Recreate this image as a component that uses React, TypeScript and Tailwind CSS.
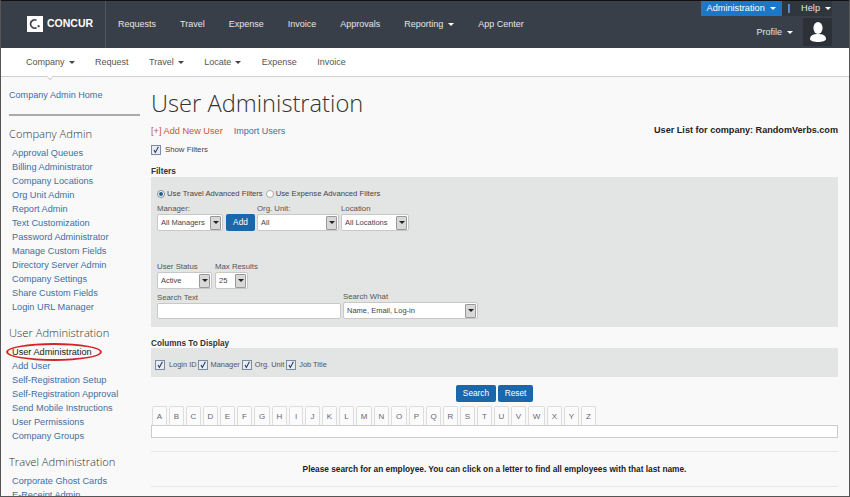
const Caret = ({ c = "border-t-white", ml = "ml-[5px]" }: { c?: string; ml?: string }) => (
  <span className={`inline-block w-0 h-0 border-l-[3px] border-r-[3px] border-t-[3px] border-l-transparent border-r-transparent ${c} ${ml} align-middle`} />
);

const Select = ({ w, text }: { w: string; text: string }) => (
  <div className={`flex items-center justify-between h-[17px] bg-white border border-[#c8c8c8] rounded-[2px] pl-[3px] pr-px ${w}`}>
    <span className="text-[7.5px] text-[#444] whitespace-nowrap">{text}</span>
    <span className="w-[11px] h-[14px] bg-[#d8d8d8] border border-[#999] rounded-[1px] flex items-center justify-center shrink-0">
      <span className="w-0 h-0 border-l-[3px] border-r-[3px] border-t-[3px] border-l-transparent border-r-transparent border-t-[#222]" />
    </span>
  </div>
);

const Check = () => (
  <span className="w-[10px] h-[10px] border border-[#7a8aa0] bg-[#e8edf4] flex items-center justify-center shrink-0">
    <svg viewBox="0 0 10 10" className="w-[8px] h-[8px]">
      <path d="M2.5 5 L4.2 8 L8 1" fill="none" stroke="#2b3a67" strokeWidth="1.4" />
    </svg>
  </span>
);

const Field = ({ label, children, className = "" }: { label: string; children: React.ReactNode; className?: string }) => (
  <div className={`flex flex-col ${className}`}>
    <span className="text-[7.8px] leading-[10px] text-[#555] whitespace-nowrap">{label}</span>
    {children}
  </div>
);

const Sec = ({ title, links, className = "" }: { title: string; links: string[]; className?: string }) => (
  <div className={className}>
    <div className="font-['Open_Sans'] font-light text-[11.2px] leading-[16px] text-[#333] whitespace-nowrap pl-[8px]">{title}</div>
    <ul className="mt-[4px] pl-[11px]">
      {links.map((l) => (
        <li key={l} className={`relative h-[14px] leading-[14px] text-[9.2px] whitespace-nowrap ${l === "User Administration" ? "text-[#222]" : "text-[#3f6f9f]"}`}>
          {l}
          {l === "User Administration" && (
            <span className="absolute left-[-6px] top-[-2px] w-[96px] h-[18px] rounded-[50%] border-2 border-[#d3242c]" />
          )}
        </li>
      ))}
    </ul>
  </div>
);

export default function App() {
  const letters = "ABCDEFGHIJKLMNOPQRSTUVWXYZ".split("");
  return (
    <div className="w-[850px] h-[497px] overflow-hidden bg-[#f9f9f9] font-['Liberation_Sans',Arial,sans-serif] flex flex-col border-l border-r border-[#555] relative">
      <header className="h-[48px] shrink-0 bg-[#383f48] border-t border-[#111] flex text-[#e3e6e9] text-[9px]">
        <div className="w-[105px] shrink-0 border-r border-[#505760] flex items-center pl-[26px] pb-[1px]">
          <span className="w-[16px] h-[16px] bg-white flex items-center justify-center">
            <svg viewBox="0 0 16 16" className="w-[16px] h-[16px]">
              <path d="M9.5 4.2 A4.2 4.2 0 1 0 9.5 11.8" fill="none" stroke="#383f48" strokeWidth="1.7" />
              <rect x="10.6" y="9.2" width="2" height="2" fill="#383f48" />
            </svg>
          </span>
          <span className="ml-[4px] font-bold text-[10.5px] text-white">CONCUR</span>
        </div>
        <nav className="flex items-center gap-[24px] pl-[12px]">
          <span>Requests</span>
          <span>Travel</span>
          <span>Expense</span>
          <span>Invoice</span>
          <span>Approvals</span>
          <span className="whitespace-nowrap">Reporting<Caret /></span>
          <span className="whitespace-nowrap">App Center</span>
        </nav>
        <div className="ml-auto w-[130px] mr-[17px] flex flex-col items-end">
          <div className="flex items-center h-[15px] bg-[#30363d]">
            <span className="h-[15px] bg-[#1a77c9] text-white px-[6px] leading-[15px] text-[9.2px] whitespace-nowrap">Administration<Caret /></span>
            <span className="mx-[6px] text-[9px] leading-[15px]">|</span>
            <span className="pr-[1px] pl-[5px] text-[9.2px] whitespace-nowrap">Help<Caret /></span>
          </div>
          <div className="flex items-center mt-[2px]">
            <span className="whitespace-nowrap mr-[10px] pt-[1px]">Profile<Caret /></span>
            <span className="w-[29px] h-[28px] bg-[#2c3138] flex items-center justify-center">
              <svg viewBox="0 0 24 24" className="w-[24px] h-[24px]">
                <ellipse cx="12" cy="8" rx="4.6" ry="6" fill="#fff" />
                <path d="M4 19 C4 15 8 14 12 14 C16 14 20 15 20 19 C20 21 16 22 12 22 C8 22 4 21 4 19Z" fill="#fff" />
              </svg>
            </span>
          </div>
        </div>
      </header>

      <div className="h-[29px] shrink-0 bg-white border-b border-[#cfcfcf] flex items-center pl-[25px] pt-[2px] gap-[20.5px] text-[9px] text-[#555] relative">
        <span className="whitespace-nowrap">Company<Caret c="border-t-[#444]" ml="ml-[4px]" /></span>
        <span>Request</span>
        <span className="whitespace-nowrap">Travel<Caret c="border-t-[#444]" ml="ml-[4px]" /></span>
        <span className="whitespace-nowrap">Locate<Caret c="border-t-[#444]" ml="ml-[4px]" /></span>
        <span>Expense</span>
        <span>Invoice</span>
        <span className="absolute left-[46px] bottom-[-3px] w-[6px] h-[6px] rotate-45 bg-white border-r border-b border-[#cfcfcf]" />
      </div>

      <div className="flex flex-1 min-h-0">
        <aside className="w-[150px] shrink-0 overflow-hidden">
          <div className="pl-[8px] pt-[12px] text-[9.1px] leading-[12px] text-[#3f6f9f] whitespace-nowrap">Company Admin Home</div>
          <div className="ml-[8px] w-[131px] mt-[13px] h-[2px] bg-[#aaa]" />
          <Sec
            className="mt-[10px]"
            title="Company Admin"
            links={["Approval Queues","Billing Administrator","Company Locations","Org Unit Admin","Report Admin","Text Customization","Password Administrator","Manage Custom Fields","Directory Server Admin","Company Settings","Share Custom Fields","Login URL Manager"]}
          />
          <Sec
            className="mt-[11px]"
            title="User Administration"
            links={["User Administration","Add User","Self-Registration Setup","Self-Registration Approval","Send Mobile Instructions","User Permissions","Company Groups"]}
          />
          <Sec
            className="mt-[11px]"
            title="Travel Administration"
            links={["Corporate Ghost Cards","E-Receipt Admin"]}
          />
        </aside>

        <main className="flex-1 min-w-0 pr-[11px] overflow-hidden">
          <h1 className="font-['Open_Sans'] font-light text-[23.7px] leading-[32px] mt-[10px] text-[#333] whitespace-nowrap">User Administration</h1>
          <div className="flex items-center justify-between mt-[4px] leading-[12px]">
            <div>
              <span className="text-[#c9543a] text-[9.2px]">[+] Add New User</span>
              <span className="text-[#3f6f9f] text-[9px] ml-[11px]">Import Users</span>
            </div>
            <span className="font-bold text-[9.1px] text-[#222]">User List for company: RandomVerbs.com</span>
          </div>
          <div className="flex items-center gap-[4px] mt-[7px] text-[7.8px] text-[#444] leading-[12px]">
            <Check />
            Show Filters
          </div>

          <div className="mt-[9px] font-bold text-[8.3px] leading-[12px] text-[#333]">Filters</div>
          <div className="bg-[#e3e4e4] h-[150px] px-[6px] pt-[11px]">
            <div className="flex items-center text-[7.7px] text-[#444] leading-[12px] whitespace-nowrap">
              <span className="w-[8px] h-[8px] rounded-full border border-[#888] bg-white flex items-center justify-center mr-[2px]"><span className="w-[4px] h-[4px] rounded-full bg-[#16608f]" /></span>
              Use Travel Advanced Filters
              <span className="w-[8px] h-[8px] rounded-full border border-[#aaa] bg-white ml-[3px] mr-[2px]" />
              Use Expense Advanced Filters
            </div>
            <div className="flex items-end mt-[4px]">
              <Field label="Manager:"><Select w="w-[66px]" text="All Managers" /></Field>
              <span className="h-[17px] w-[29px] ml-[3px] bg-[#1a67ac] rounded-[2px] text-white text-[8.3px] flex items-center justify-center">Add</span>
              <Field label="Org. Unit:" className="ml-[2px]"><Select w="w-[82px]" text="All" /></Field>
              <Field label="Location" className="ml-[2px]"><Select w="w-[68px]" text="All Locations" /></Field>
            </div>
            <div className="flex items-end mt-[31px]">
              <Field label="User Status"><Select w="w-[55px]" text="Active" /></Field>
              <Field label="Max Results" className="ml-[3px]"><Select w="w-[33px]" text="25" /></Field>
            </div>
            <div className="flex items-end mt-[3px]">
              <Field label="Search Text"><div className="w-[184px] h-[16px] bg-white border border-[#c8c8c8] rounded-[2px]" /></Field>
              <Field label="Search What" className="ml-[2px]"><Select w="w-[135px]" text="Name, Email, Log-in" /></Field>
            </div>
          </div>

          <div className="mt-[12px] font-bold text-[8.2px] leading-[9px] text-[#333]">Columns To Display</div>
          <div className="bg-[#e3e4e4] h-[29px] px-[4px] pt-[5px] flex items-center text-[7.4px] text-[#555] whitespace-nowrap">
            <Check /><span className="ml-[4px] mr-px">Login ID</span>
            <Check /><span className="ml-[3px] mr-[2px]">Manager</span>
            <Check /><span className="ml-[3px] mr-[2px]">Org. Unit</span>
            <Check /><span className="ml-[3px]">Job Title</span>
          </div>

          <div className="flex justify-center gap-[2px] mt-[8px]">
            <span className="w-[40px] h-[17px] bg-[#1a67ac] rounded-[2px] text-white text-[8.3px] flex items-center justify-center">Search</span>
            <span className="w-[35px] h-[17px] bg-[#1a67ac] rounded-[2px] text-white text-[8.3px] flex items-center justify-center">Reset</span>
          </div>

          <div className="flex mt-[4px] ml-px gap-[2px]">
            {letters.map((l) => (
              <span key={l} className={`h-[19px] pt-[2px] bg-[#fbfbfb] border border-[#ddd] border-b-0 rounded-t-[2px] text-[8px] text-[#667] flex items-center justify-center ${l === "W" ? "w-[17px]" : "GMO".includes(l) ? "w-[16px]" : l === "I" ? "w-[14px]" : "w-[15px]"}`}>{l}</span>
            ))}
          </div>
          <div className="h-[13px] bg-white border border-[#ccc]" />
          <div className="mt-[13px] border-y border-[#e8e8e8] h-[36px] flex items-center justify-center font-bold text-[8.3px] text-[#222]">
            Please search for an employee. You can click on a letter to find all employees with that last name.
          </div>
        </main>
      </div>
      <div className="absolute left-0 right-0 bottom-0 h-px bg-[#555]" />
    </div>
  );
}
